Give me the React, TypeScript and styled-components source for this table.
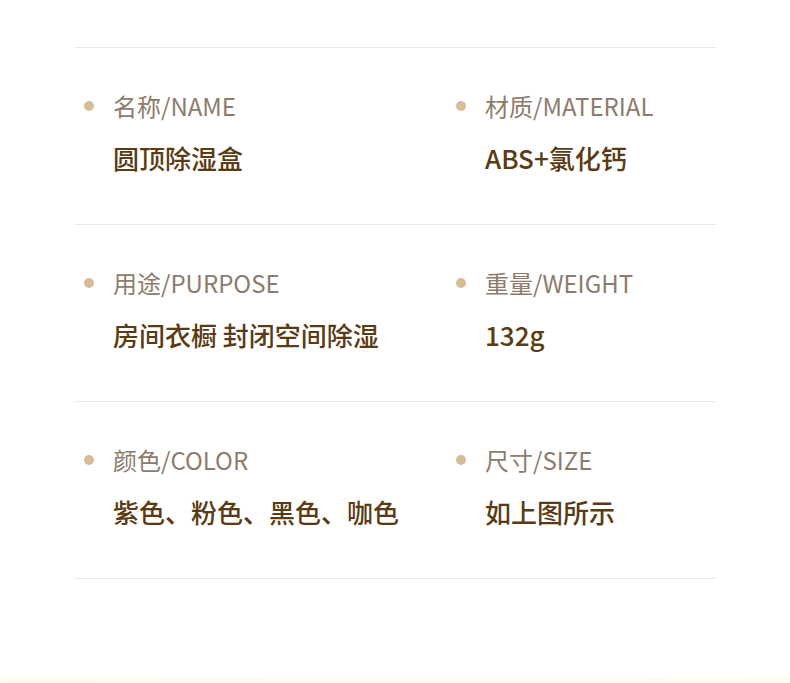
import React from "react";
import styled, { createGlobalStyle } from "styled-components";

const GlobalStyle = createGlobalStyle`
  html, body {
    margin: 0;
    padding: 0;
    background: #fff;
  }
  body {
    font-family: "Noto Sans CJK SC", "Noto Sans", sans-serif;
  }
`;

const Page = styled.div`
  width: 790px;
  height: 683px;
  display: flex;
  flex-direction: column;
  overflow: hidden;
`;

const Table = styled.div`
  margin: 47px 74px 0 75px;
  border-bottom: 1px solid #e6e6e6;
`;

const Row = styled.div`
  display: grid;
  grid-template-columns: 372px 1fr;
  height: 176px;
  border-top: 1px solid #e6e6e6;
`;

const Cell = styled.div`
  display: flex;
  flex-direction: column;
  padding: 45px 0 0 9px;
`;

const Label = styled.div`
  display: flex;
  align-items: center;
  gap: 19px;
  font-size: 24px;
  line-height: 26px;
  color: #8d7c6c;
  font-weight: 400;
`;

const Dot = styled.span`
  width: 10px;
  height: 10px;
  border-radius: 50%;
  background: #d6bc98;
  flex-shrink: 0;
`;

const Value = styled.div`
  margin: 25px 0 0 29px;
  font-size: 26px;
  line-height: 28px;
  font-weight: 500;
  color: #5a3b14;
  white-space: nowrap;
`;

const Strip = styled.div`
  margin-top: auto;
  height: 5px;
  background: linear-gradient(90deg, #fffbee, #fdfdf2 50%, #fffcef);
`;

const rows: [string, string][][] = [
  [
    ["名称/NAME", "圆顶除湿盒"],
    ["材质/MATERIAL", "ABS+氯化钙"],
  ],
  [
    ["用途/PURPOSE", "房间衣橱 封闭空间除湿"],
    ["重量/WEIGHT", "132g"],
  ],
  [
    ["颜色/COLOR", "紫色、粉色、黑色、咖色"],
    ["尺寸/SIZE", "如上图所示"],
  ],
];

export default function App() {
  return (
    <Page>
      <GlobalStyle />
      <Table>
        {rows.map((row, i) => (
          <Row key={i}>
            {row.map(([label, value]) => (
              <Cell key={label}>
                <Label>
                  <Dot />
                  {label}
                </Label>
                <Value>{value}</Value>
              </Cell>
            ))}
          </Row>
        ))}
      </Table>
      <Strip />
    </Page>
  );
}
